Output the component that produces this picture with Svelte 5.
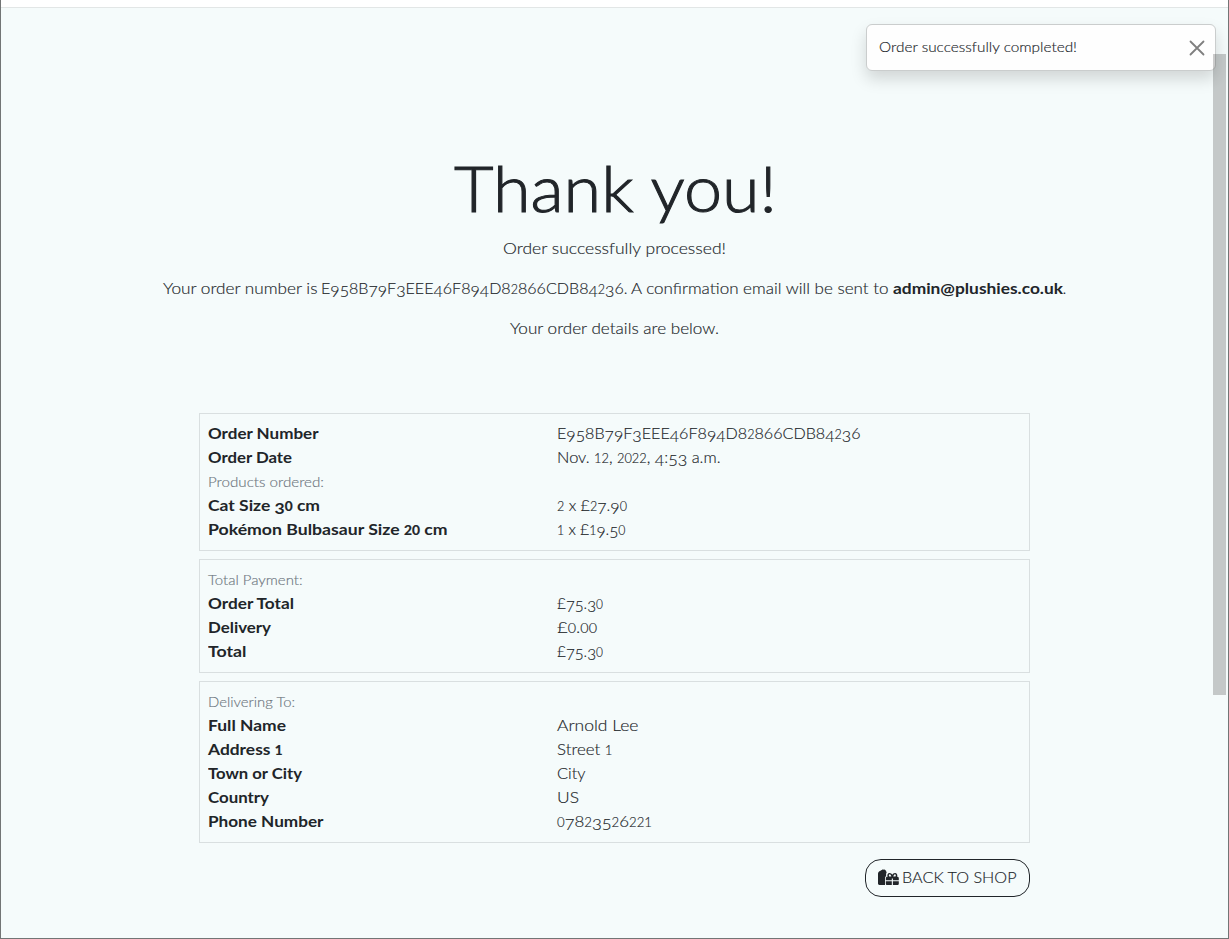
<script>
  const orderNumber = 'E958B79F3EEE46F894D82866CDB84236';

  // each entry pairs a text with its set width in pixels
  const sections = [
    [
      { label: ['Order Number', 110.5], value: [orderNumber, 303.5] },
      { label: ['Order Date', 84], value: ['Nov. 12, 2022, 4:53 a.m.', 163.5] },
      { heading: ['Products ordered:', 116] },
      { label: ['Cat Size 30 cm', 112], value: ['2 x £27.90', 70] },
      { label: ['Pokémon Bulbasaur Size 20 cm', 239.5], value: ['1 x £19.50', 68.5] }
    ],
    [
      { heading: ['Total Payment:', 94.5] },
      { label: ['Order Total', 86], value: ['£75.30', 46] },
      { label: ['Delivery', 63], value: ['£0.00', 40] },
      { label: ['Total', 38.5], value: ['£75.30', 46] }
    ],
    [
      { heading: ['Delivering To:', 87] },
      { label: ['Full Name', 78], value: ['Arnold Lee', 81.5] },
      { label: ['Address 1', 74.5], value: ['Street 1', 55.5] },
      { label: ['Town or City', 94], value: ['City', 28.5] },
      { label: ['Country', 61], value: ['US', 22] },
      { label: ['Phone Number', 115.5], value: ['07823526221', 95] }
    ]
  ];

  // Expands a line of text so that it takes up the given width
  function fit(node, width) {
    const natural = node.getBoundingClientRect().width;
    node.style.width = width + 'px';
    node.style.transform = `scaleX(${width / natural})`;
    node.firstElementChild.style.width = natural + 'px';
  }

  // Splits text into runs for old-style figures
  const runs = (text) => text.match(/[012]+|[34579]+|[^01234579]+/g) ?? [];
  const kind = (run) => (/^[012]/.test(run) ? 'short' : /^[34579]/.test(run) ? 'low' : 'plain');
</script>

{#snippet set(text, width)}<span class="set" use:fit={width}><span>{#each runs(text) as run}<span class={kind(run)}>{run}</span>{/each}</span></span>{/snippet}

<div class="window">
  <header></header>
  <main>
    <section class="intro">
      <h1>{@render set('Thank you!', 323)}</h1>
      <p>{@render set('Order successfully processed!', 223)}</p>
      <p>{@render set('Your order number is', 154.5)}<span class="gap"></span>{@render set(orderNumber + '.', 306.5)}<span class="gap"></span>{@render set('A confirmation email will be sent to', 257.5)}<span class="gap wide"></span><strong>{@render set('admin@plushies.co.uk', 170)}</strong>.</p>
      <p>{@render set('Your order details are below.', 209)}</p>
    </section>

    <section class="order">
      {#each sections as rows}
        <div class="card">
          {#each rows as row}
            <div class="row">
              {#if row.heading}
                <small>{@render set(row.heading[0], row.heading[1])}</small>
              {:else}
                <strong>{@render set(row.label[0], row.label[1])}</strong>
                <span>{@render set(row.value[0], row.value[1])}</span>
              {/if}
            </div>
          {/each}
        </div>
      {/each}
      <button class="back">
        <svg width="21" height="17" viewBox="0 0 21 17" fill="currentColor" aria-hidden="true">
          <path d="M0 4.8C0 3.5 1 2.4 2.2 2.1L3 1.2 4 .9 4.8.2 5.8.7 6.8.5 7.4 1.3 8.3 1.9 8.2 2.9 8.8 3.8 8.1 4.6V7C7.4 7.4 7 8.3 7 9.3V16H1.4C.6 16 0 15.4 0 14.6Z"/>
          <path fill-rule="evenodd" d="M7.8 11.3V9.2C7.8 8.4 8.4 7.8 9.2 7.8H9.6C8.8 5.8 9.8 4 11.6 4 12.8 4 13.7 4.8 14.3 5.8 14.9 4.8 15.8 4 17 4 18.8 4 19.9 5.8 19.1 7.8H19.4C20.2 7.8 20.8 8.4 20.8 9.2V11.3H14.9V9.5H13.8V11.3ZM11.2 7.5H13.4C13 6.3 12.6 5.2 11.8 5.2 10.8 5.2 10.6 6.5 11.2 7.5ZM17.5 7.5C18.1 6.5 17.9 5.2 16.9 5.2 16.1 5.2 15.7 6.3 15.3 7.5Z"/>
          <path d="M7.8 12.3H13.8V16H9.1C8.4 16 7.8 15.4 7.8 14.7ZM14.9 12.3H20.8V14.7C20.8 15.4 20.2 16 19.5 16H14.9Z"/>
        </svg>
        {@render set('BACK TO SHOP', 114.5)}
      </button>
    </section>
  </main>

  <div class="toast">
    {@render set('Order successfully completed!', 198)}
    <svg width="16" height="16" viewBox="0 0 16 16" aria-label="Close"><path d="M1.5 1.5 14.5 14.5M14.5 1.5 1.5 14.5" fill="none" stroke="#7f7f7f" stroke-width="1.8" stroke-linecap="round"/></svg>
  </div>
  <div class="thumb"></div>
</div>

<style>
  .window {
    box-sizing: border-box;
    position: relative;
    width: 1229px;
    height: 939px;
    overflow: hidden;
    border: 1px solid #727575;
    border-top: 0;
    background: #f5fbfb;
    color: #212529;
    font: 300 16.5px/24px Lato, sans-serif;
    -webkit-text-stroke: 0.15px;
  }
  header {
    box-sizing: border-box;
    height: 8px;
    background: #fff;
    border-bottom: 1px solid #e2e6e6;
  }
  .intro {
    box-sizing: border-box;
    height: 405px;
    padding-top: 141px;
    text-align: center;
  }
  h1 {
    margin: 0 0 10px 1px;
    font-size: 62.5px;
    font-weight: 300;
    line-height: 77px;
    -webkit-text-stroke: 1px;
  }
  p { margin: 0 0 16px; white-space: nowrap; }
  .set { display: inline-block; white-space: pre; transform-origin: 0 50%; text-align: left; }
  .set > span { display: inline-block; }
  .gap { display: inline-block; width: 3.5px; }
  .gap.wide { width: 4.5px; }
  .short { font-size: 0.78em; line-height: 1; -webkit-text-stroke: 0.15px; }
  .low { vertical-align: -0.17em; line-height: 1; }
  strong { font-size: 16px; font-weight: 700; -webkit-text-stroke: 0; }
  strong .short { -webkit-text-stroke: 0.2px; }
  .order {
    width: 831px;
    margin-left: 198px;
    display: flex;
    flex-direction: column;
    gap: 8px;
  }
  .card {
    padding: 7px 8px 9px;
    border: 1px solid #d9dfe0;
  }
  .row {
    display: grid;
    grid-template-columns: 349px 1fr;
    height: 24px;
    white-space: nowrap;
  }
  small { padding-top: 1px; font-size: 14.4px; color: #6c757d; }
  .back {
    box-sizing: border-box;
    align-self: flex-end;
    display: flex;
    align-items: center;
    gap: 3px;
    width: 165px;
    height: 38px;
    margin-top: 8px;
    padding: 0 0 2px 12px;
    border: 1px solid #212529;
    border-radius: 16px;
    background: transparent;
    color: #212529;
    font: inherit;
  }
  .back svg { margin-top: 1px; }
  .toast {
    box-sizing: border-box;
    position: absolute;
    left: 865px;
    top: 24px;
    width: 350px;
    height: 47px;
    padding: 0 10px 2px 12px;
    display: flex;
    align-items: center;
    justify-content: space-between;
    border: 1px solid #cacdcd;
    border-radius: 6px;
    background: #fefefe;
    box-shadow: 0 8px 16px rgba(0, 0, 0, 0.15);
    font-size: 14.4px;
  }
  .toast svg { margin-top: 2px; }
  .thumb {
    position: absolute;
    left: 1212px;
    top: 54px;
    width: 13px;
    height: 641px;
    background: rgba(0, 0, 0, 0.2);
  }
</style>
